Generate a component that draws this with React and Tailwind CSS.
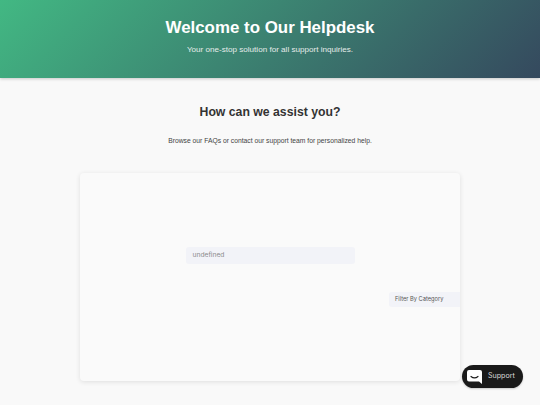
export default function App() {
  return (
    <div className="relative h-[405px] overflow-hidden bg-[#f9f9f9] font-['Liberation_Sans',Arial,sans-serif] antialiased">
      <header className="h-[78px] flex flex-col items-center pt-[18px] bg-linear-[135deg] from-[#42b883] to-[#35495e] shadow-[0_1px_3px_rgba(0,0,0,0.2)]">
        <h1 className="text-[16.9px] leading-[20px] font-bold text-white">Welcome to Our Helpdesk</h1>
        <p className="mt-[6px] text-[8.1px] leading-[12px] text-[#e6ecea]">Your one-stop solution for all support inquiries.</p>
      </header>

      <main className="flex flex-col items-center">
        <h2 className="mt-[26px] text-[12.25px] leading-[16px] font-bold text-[#333]">How can we assist you?</h2>
        <p className="mt-[16px] text-[6.75px] leading-[10px] text-[#444]">Browse our FAQs or contact our support team for personalized help.</p>

        <section className="mt-[27px] w-[380px] h-[208px] rounded-[4px] bg-[#fafafa] shadow-[0_1px_5px_rgba(0,0,0,0.11)] flex flex-col">
          <div className="mt-[74px] mx-auto w-[169px] h-[17px] rounded-[3px] bg-[#f2f3f8] px-[7px] flex items-center text-[6.7px] text-[#8a8a8a] font-['Inter',sans-serif]">
            undefined
          </div>
          <div className="mt-[28px] self-end w-[71px] h-[15px] rounded-l-[3px] bg-[#f2f3f8] px-[6px] flex items-center text-[5.7px] text-[#555] font-['Inter',sans-serif] whitespace-nowrap">
            Filter By Category
          </div>
        </section>
      </main>

      <button className="absolute left-[462px] top-[365px] w-[61px] h-[23px] rounded-full bg-[#1a1a1a] flex items-center gap-[6px] pl-[5px] shadow-[0_1px_2px_rgba(0,0,0,0.2)]">
        <svg width="15" height="14" viewBox="0 0 15 14">
          <path d="M2 0h11a2 2 0 0 1 2 2v12l-3-2.5H2a2 2 0 0 1-2-2V2a2 2 0 0 1 2-2z" fill="#fff" />
          <path d="M4 6.5c2 1.6 5 1.6 7 0" fill="none" stroke="#1a1a1a" strokeWidth="1.2" strokeLinecap="round" />
        </svg>
        <span className="text-[7.1px] text-[#ddd] font-['Inter',sans-serif]">Support</span>
      </button>
    </div>
  )
}
